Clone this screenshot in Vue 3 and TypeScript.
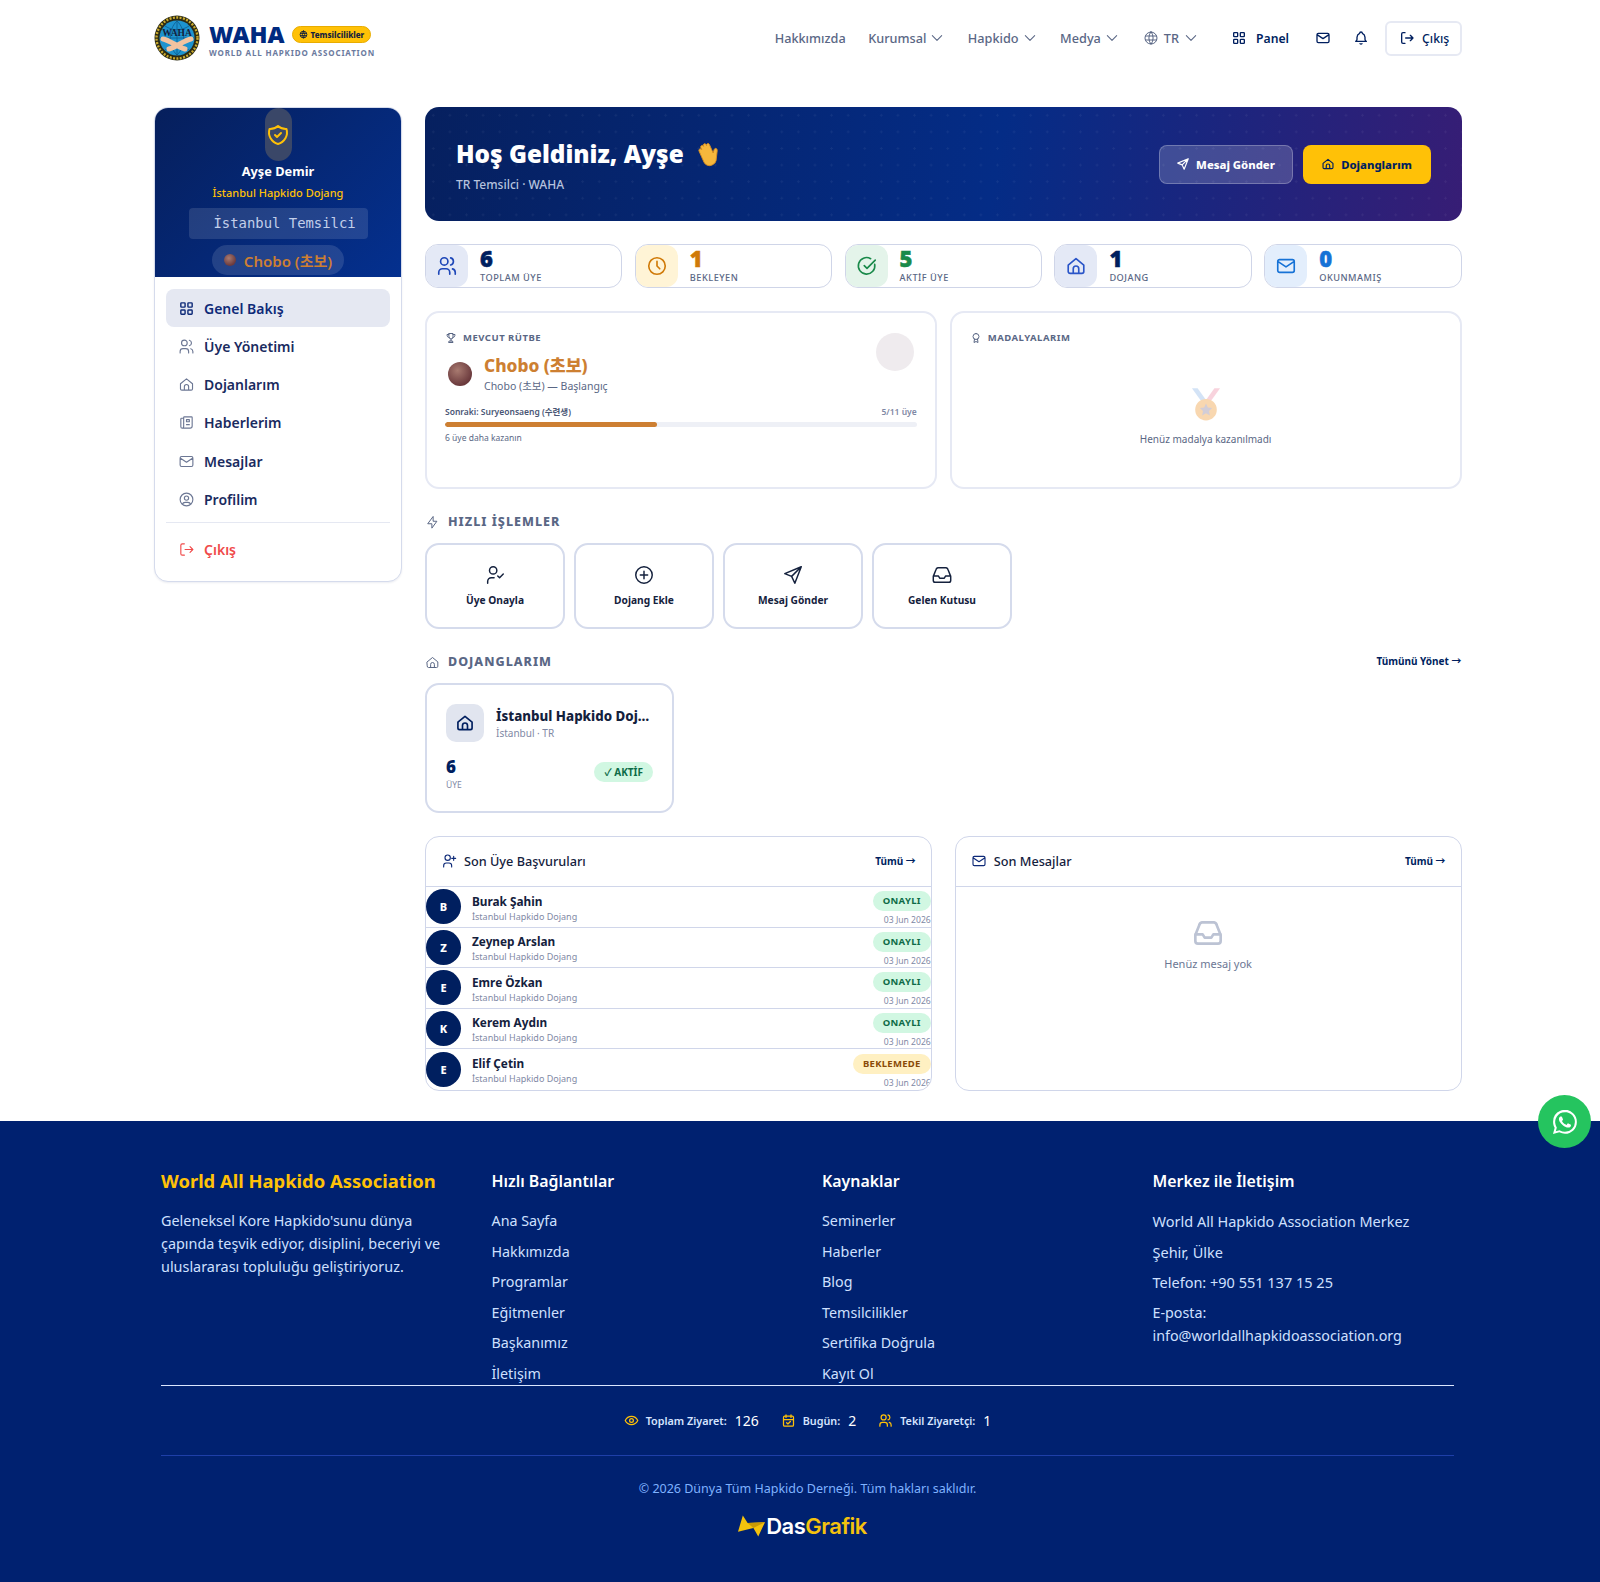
<template>
  <div class="page">
    <header class="topbar">
      <div class="brand">
        <svg class="emblem" viewBox="0 0 46 46">
          <circle cx="23" cy="23" r="22.5" fill="#2b2a14" />
          <circle cx="23" cy="23" r="20.5" fill="none" stroke="#c9a92c" stroke-width="2.4" stroke-dasharray="2 1.4" />
          <circle cx="23" cy="23" r="17.5" fill="#1d93cf" />
          <path d="M23 6v34M6 23h34M11 11c8 5 16 5 24 0M11 35c8-5 16-5 24 0M23 6c-9 8-9 26 0 34M23 6c9 8 9 26 0 34" fill="none" stroke="#0d5c8e" stroke-width=".8" />
          <text x="23" y="21" text-anchor="middle" font-size="9.5" font-weight="700" font-family="Liberation Serif, serif" fill="#14213d">WAHA</text>
          <path d="M9 24c6 1 15 8 22 10M37 24c-6 1-15 8-22 10" fill="none" stroke="#f2c3a0" stroke-width="5" stroke-linecap="round" />
        </svg>
        <div class="brand-text">
          <div class="brand-top">
            <span class="waha">WAHA</span>
            <span class="tem-badge">
              <svg class="ic tem-ic" viewBox="0 0 24 24"><path :d="icons.globe" /></svg>
              Temsilcilikler
            </span>
          </div>
          <div class="brand-sub">WORLD ALL HAPKIDO ASSOCIATION</div>
        </div>
      </div>
      <nav class="topnav">
        <a class="tn first">Hakkımızda</a>
        <a v-for="n in dropdowns" :key="n" class="tn">{{ n }}
          <svg class="ic chev" viewBox="0 0 24 24"><path :d="icons.chevron" /></svg>
        </a>
        <a class="tn lang">
          <svg class="ic globe" viewBox="0 0 24 24"><path :d="icons.globe" /></svg>TR
          <svg class="ic chev" viewBox="0 0 24 24"><path :d="icons.chevron" /></svg>
        </a>
        <a class="tn dark panel">
          <svg class="ic s16" viewBox="0 0 24 24"><path :d="icons.grid" /></svg>Panel
        </a>
        <svg class="ic s16 dark mail" viewBox="0 0 24 24"><path :d="icons.mail" /></svg>
        <svg class="ic s16 dark bell" viewBox="0 0 24 24"><path :d="icons.bell" /></svg>
        <button class="logout-btn">
          <svg class="ic s16" viewBox="0 0 24 24"><path :d="icons.logout" /></svg>Çıkış
        </button>
      </nav>
    </header>

    <div class="layout">
      <aside class="side">
        <div class="side-head">
          <div class="avatar">
            <svg class="ic shield" viewBox="0 0 24 24"><path :d="icons.shield" /></svg>
          </div>
          <div class="side-name">Ayşe Demir</div>
          <div class="side-dojang">İstanbul Hapkido Dojang</div>
          <div class="side-role">İstanbul Temsilci</div>
          <div class="side-rank"><i class="ball small"></i>Chobo (초보)</div>
        </div>
        <div class="side-nav">
          <a v-for="(item, i) in sideItems" :key="item.label" class="side-item" :class="{ active: i === 0 }">
            <svg class="ic s17" viewBox="0 0 24 24"><path :d="icons[item.icon]" /></svg>{{ item.label }}
          </a>
          <div class="side-line"></div>
          <a class="side-item exit">
            <svg class="ic s17" viewBox="0 0 24 24"><path :d="icons.logout" /></svg>Çıkış
          </a>
        </div>
      </aside>

      <main class="main">
        <section class="hero">
          <div>
            <h1 class="hero-title">Hoş Geldiniz, Ayşe
              <svg class="wave" viewBox="0 0 24 24">
                <g transform="rotate(-24 12 12)">
                  <path d="M6 12V6.5a1.3 1.3 0 0 1 2.6 0V4.500a1.3 1.3 0 0 1 2.6 0V4a1.3 1.3 0 0 1 2.6 0v1a1.3 1.3 0 0 1 2.6 0v8l2-2.400a1.400 1.400 0 0 1 2.100 1.800L16 20a5 5 0 0 1-4 2H11a5 5 0 0 1-5-5z" fill="#f6b73c" stroke="#d98e1f" stroke-width=".7" />
                </g>
              </svg>
            </h1>
            <p class="hero-sub">TR Temsilci · WAHA</p>
          </div>
          <div class="hero-btns">
            <button class="hbtn ghost"><svg class="ic s14" viewBox="0 0 24 24"><path :d="icons.send" /></svg>Mesaj Gönder</button>
            <button class="hbtn gold"><svg class="ic s14" viewBox="0 0 24 24"><path :d="icons.home" /></svg>Dojanglarım</button>
          </div>
        </section>

        <section class="stats">
          <div v-for="s in stats" :key="s.label" class="stat">
            <div class="stat-ic" :style="{ background: s.bg, color: s.color }">
              <svg class="ic s22" viewBox="0 0 24 24"><path :d="icons[s.icon]" /></svg>
            </div>
            <div class="stat-body">
              <div class="stat-num" :style="{ color: s.numColor }">{{ s.value }}</div>
              <div class="stat-label">{{ s.label }}</div>
            </div>
          </div>
        </section>

        <section class="rank-row">
          <div class="card rank-card">
            <div class="mini-title"><svg class="ic s12" viewBox="0 0 24 24"><path :d="icons.trophy" /></svg>MEVCUT RÜTBE</div>
            <div class="rank-main">
              <i class="ball"></i>
              <div>
                <div class="rank-name">Chobo (초보)</div>
                <div class="rank-desc">Chobo (초보) — Başlangıç</div>
              </div>
            </div>
            <div class="prog-top"><span>Sonraki: Suryeonsaeng (수련생)</span><span class="prog-count">5/11 üye</span></div>
            <div class="prog-bar"><div class="prog-fill" :style="{ width: progress + '%' }"></div></div>
            <div class="prog-note">6 üye daha kazanın</div>
            <div class="rank-ghost"></div>
          </div>
          <div class="card medal-card">
            <div class="mini-title"><svg class="ic s12" viewBox="0 0 24 24"><path :d="icons.award" /></svg>MADALYALARIM</div>
            <div class="medal-empty">
              <svg class="medal" viewBox="0 0 32 36">
                <path d="M1 0h6l10 14h-6z" fill="#a9c8ef" />
                <path d="M31 0h-6L15 14h6z" fill="#f3a9bd" />
                <circle cx="16" cy="23" r="11.500" fill="#f3b163" />
                <path d="M16 16.500l2 4.200 4.600.6-3.400 3.200.9 4.600-4.100-2.300-4.100 2.300.9-4.600-3.400-3.200 4.600-.6z" fill="#a79cb0" />
              </svg>
              <p>Henüz madalya kazanılmadı</p>
            </div>
          </div>
        </section>

        <h2 class="sec-title"><svg class="ic s15" viewBox="0 0 24 24"><path :d="icons.bolt" /></svg>HIZLI İŞLEMLER</h2>
        <section class="quick">
          <a v-for="q in quick" :key="q.label" class="quick-card">
            <svg class="ic s22" viewBox="0 0 24 24"><path :d="icons[q.icon]" /></svg>
            <span>{{ q.label }}</span>
          </a>
        </section>

        <div class="sec-head">
          <h2 class="sec-title flat"><svg class="ic s15" viewBox="0 0 24 24"><path :d="icons.home" /></svg>DOJANGLARIM</h2>
          <a class="more up">Tümünü Yönet →</a>
        </div>
        <div class="dojang-card">
          <div class="dj-top">
            <div class="dj-ic"><svg class="ic s20" viewBox="0 0 24 24"><path :d="icons.home" /></svg></div>
            <div class="dj-txt">
              <div class="dj-name">İstanbul Hapkido Dojang</div>
              <div class="dj-loc">İstanbul · TR</div>
            </div>
          </div>
          <div class="dj-bottom">
            <div>
              <div class="dj-num">6</div>
              <div class="dj-unit">ÜYE</div>
            </div>
            <span class="dj-badge">✓ AKTİF</span>
          </div>
        </div>

        <section class="lists">
          <div class="card list-card">
            <div class="list-head">
              <span class="list-title"><svg class="ic s16" viewBox="0 0 24 24"><path :d="icons.userPlus" /></svg>Son Üye Başvuruları</span>
              <a class="more">Tümü →</a>
            </div>
            <div v-for="m in members" :key="m.name" class="row">
              <div class="row-av">{{ m.name[0] }}</div>
              <div class="row-info">
                <div class="row-name">{{ m.name }}</div>
                <div class="row-sub">İstanbul Hapkido Dojang</div>
              </div>
              <div class="row-right">
                <span class="row-badge" :class="{ wait: m.status === 'BEKLEMEDE' }">{{ m.status }}</span>
                <span class="row-date">03 Jun 2026</span>
              </div>
            </div>
          </div>
          <div class="card list-card">
            <div class="list-head">
              <span class="list-title"><svg class="ic s16" viewBox="0 0 24 24"><path :d="icons.mail" /></svg>Son Mesajlar</span>
              <a class="more">Tümü →</a>
            </div>
            <div class="msg-empty">
              <svg class="ic s32" viewBox="0 0 24 24"><path :d="icons.inbox" /></svg>
              <p>Henüz mesaj yok</p>
            </div>
          </div>
        </section>
      </main>
    </div>

    <footer class="footer">
      <div class="foot-inner">
        <div class="foot-grid">
          <div>
            <h3 class="foot-brand">World All Hapkido Association</h3>
            <p class="foot-desc">Geleneksel Kore Hapkido'sunu dünya çapında teşvik ediyor, disiplini, beceriyi ve uluslararası topluluğu geliştiriyoruz.</p>
          </div>
          <div v-for="col in footCols" :key="col.title">
            <h4 class="foot-h">{{ col.title }}</h4>
            <a v-for="l in col.links" :key="l" class="foot-link">{{ l }}</a>
          </div>
          <div class="foot-contact">
            <h4 class="foot-h">Merkez ile İletişim</h4>
            <a class="foot-link">World All Hapkido Association Merkez</a>
            <a class="foot-link">Şehir, Ülke</a>
            <a class="foot-link">Telefon: +90 551 137 15 25</a>
            <p class="foot-mail">E-posta:<br />info@worldallhapkidoassociation.org</p>
          </div>
        </div>
        <div class="foot-stats">
          <span v-for="v in visits" :key="v.label" class="fs">
            <svg class="ic s15" viewBox="0 0 24 24"><path :d="icons[v.icon]" /></svg>
            <b>{{ v.label }}:</b><em>{{ v.value }}</em>
          </span>
        </div>
        <div class="foot-copy">
          <p>© 2026 Dünya Tüm Hapkido Derneği. Tüm hakları saklıdır.</p>
          <div class="das">
            <svg class="das-mark" viewBox="0 0 28 22">
              <path d="M5 0l5 8 18-1-7 15-5-9L0 17z" fill="#f4c20d" />
              <path d="M10 8l6 5 12-6z" fill="#c99a06" />
            </svg>
            <span>Das<u>Grafik</u></span>
          </div>
        </div>
      </div>
    </footer>

    <a class="wa">
      <svg viewBox="0 0 16 16" class="wa-ic"><path fill="#fff" d="M13.6 2.33A7.9 7.9 0 0 0 .05 7.92c0 1.4.37 2.76 1.06 3.96L0 16l4.2-1.1a7.9 7.9 0 0 0 3.78.96h.01c4.37 0 7.93-3.55 7.93-7.93 0-2.12-.83-4.11-2.32-5.6zM7.99 14.52a6.6 6.6 0 0 1-3.36-.92l-.24-.14-2.5.65.67-2.43-.16-.25a6.58 6.58 0 1 1 12.2-3.5 6.6 6.6 0 0 1-6.61 6.59zm3.61-4.93c-.2-.1-1.17-.58-1.35-.64-.18-.07-.31-.1-.44.1-.13.2-.51.64-.63.77-.11.13-.23.15-.43.05-.2-.1-.84-.31-1.6-.99-.59-.53-.99-1.18-1.1-1.38-.12-.2-.02-.3.08-.4l.3-.35c.1-.11.13-.2.2-.33.06-.13.03-.25-.02-.35-.05-.1-.44-1.07-.61-1.46-.16-.38-.32-.33-.44-.34h-.38c-.13 0-.35.05-.53.25-.18.2-.69.68-.69 1.65 0 .97.71 1.91.81 2.04.1.13 1.4 2.13 3.38 2.99.47.2.84.33 1.13.42.47.15.9.13 1.24.08.38-.06 1.17-.48 1.33-.94.17-.46.17-.86.12-.94-.05-.08-.18-.13-.38-.23z" /></svg>
    </a>
  </div>
</template>

<script setup lang="ts">
const progress = 45

const icons: Record<string, string> = {
  grid: 'M5 4h4a1 1 0 0 1 1 1v4a1 1 0 0 1-1 1H5a1 1 0 0 1-1-1V5a1 1 0 0 1 1-1zM15 4h4a1 1 0 0 1 1 1v4a1 1 0 0 1-1 1h-4a1 1 0 0 1-1-1V5a1 1 0 0 1 1-1zM5 14h4a1 1 0 0 1 1 1v4a1 1 0 0 1-1 1H5a1 1 0 0 1-1-1v-4a1 1 0 0 1 1-1zM15 14h4a1 1 0 0 1 1 1v4a1 1 0 0 1-1 1h-4a1 1 0 0 1-1-1v-4a1 1 0 0 1 1-1z',
  users: 'M9 3a4 4 0 1 0 0 8 4 4 0 0 0 0-8zM3 21v-2a4 4 0 0 1 4-4h4a4 4 0 0 1 4 4v2M16 3.13a4 4 0 0 1 0 7.75M21 21v-2a4 4 0 0 0-3-3.85',
  home: 'M3.500 11 12 4l8.500 7v7a2 2 0 0 1-2 2h-13a2 2 0 0 1-2-2zM9 20v-5a3 3 0 0 1 6 0v5',
  news: 'M8 6H5a1 1 0 0 0-1 1v11a2 2 0 0 0 4 0V5a1 1 0 0 1 1-1h10a1 1 0 0 1 1 1v12a3 3 0 0 1-3 3H6M12 8h4v3h-4zM12 15h4',
  mail: 'M5 5h14a2 2 0 0 1 2 2v10a2 2 0 0 1-2 2H5a2 2 0 0 1-2-2V7a2 2 0 0 1 2-2zM3 7l9 6 9-6',
  profile: 'M12 3a9 9 0 1 0 0 18 9 9 0 0 0 0-18zM12 7a3 3 0 1 0 0 6 3 3 0 0 0 0-6zM6.200 18.800A4 4 0 0 1 10 16h4a4 4 0 0 1 3.800 2.800',
  logout: 'M9 4H6a2 2 0 0 0-2 2v12a2 2 0 0 0 2 2h3M10 12h11M17 8l4 4-4 4',
  chevron: 'M4 8l8 8 8-8',
  globe: 'M12 3a9 9 0 1 0 0 18 9 9 0 0 0 0-18zM3.600 9h16.800M3.600 15h16.800M11.500 3a17 17 0 0 0 0 18M12.500 3a17 17 0 0 1 0 18',
  bell: 'M10 5a2 2 0 1 1 4 0 7 7 0 0 1 4 6v3a4 4 0 0 0 2 3H4a4 4 0 0 0 2-3v-3a7 7 0 0 1 4-6M10.500 20.500a2 2 0 0 0 3 0',
  send: 'M21 3 3 10.500l7.500 3L14 21zM21 3 10.500 13.500',
  shield: 'M12 3a12 12 0 0 0 8.500 3A12 12 0 0 1 12 21 12 12 0 0 1 3.500 6 12 12 0 0 0 12 3zM9 12l2 2 4-4',
  clock: 'M12 3a9 9 0 1 0 0 18 9 9 0 0 0 0-18zM12 7v5l3 3',
  check: 'M20.400 10.200A9 9 0 1 1 16 4M9 11.500l3 3 9-9',
  trophy: 'M8 3h8v7a4 4 0 0 1-8 0zM8 5H4c0 4 1.500 6 4 6M16 5h4c0 4-1.500 6-4 6M12 14v4M8 21h8l-1-3H9z',
  award: 'M12 3a6 6 0 1 0 0 12 6 6 0 0 0 0-12zM9 14l-1 7 4-2 4 2-1-7',
  bolt: 'M13 3v7h6l-8 11v-7H5z',
  userCheck: 'M10 3a4 4 0 1 0 0 8 4 4 0 0 0 0-8zM4 21v-2a4 4 0 0 1 4-4h3M15 13l2 2 4-4',
  plus: 'M12 3a9 9 0 1 0 0 18 9 9 0 0 0 0-18zM8 12h8M12 8v8',
  inbox: 'M2.500 13.500 5.500 6a2.500 2.500 0 0 1 2-2h9a2.500 2.500 0 0 1 2 2l3 7.500V18a2 2 0 0 1-2 2H4.500a2 2 0 0 1-2-2zM2.500 13H8l1.500 2.500h5L16 13h5.500',
  userPlus: 'M10 3a4 4 0 1 0 0 8 4 4 0 0 0 0-8zM4 21v-2a4 4 0 0 1 4-4h4a4 4 0 0 1 4 4v2M16 8h6M19 5v6',
  eye: 'M12 5.500c5 0 8.500 3.500 10 6.500-1.500 3-5 6.500-10 6.500S3.500 15 2 12c1.500-3 5-6.500 10-6.500zM12 9a3 3 0 1 0 0 6 3 3 0 0 0 0-6z',
  calendar: 'M6 5h12a2 2 0 0 1 2 2v12a2 2 0 0 1-2 2H6a2 2 0 0 1-2-2V7a2 2 0 0 1 2-2zM16 3v4M8 3v4M4 10.500h16M9 15.500l2 2 4-4',
}

const dropdowns = ['Kurumsal', 'Hapkido', 'Medya']

const sideItems = [
  { label: 'Genel Bakış', icon: 'grid' },
  { label: 'Üye Yönetimi', icon: 'users' },
  { label: 'Dojanlarım', icon: 'home' },
  { label: 'Haberlerim', icon: 'news' },
  { label: 'Mesajlar', icon: 'mail' },
  { label: 'Profilim', icon: 'profile' },
]

const stats = [
  { value: 6, label: 'TOPLAM ÜYE', icon: 'users', bg: '#e4e9f6', color: '#1e47b8', numColor: '#001f5f' },
  { value: 1, label: 'BEKLEYEN', icon: 'clock', bg: '#fff4d6', color: '#d07a08', numColor: '#d07a08' },
  { value: 5, label: 'AKTİF ÜYE', icon: 'check', bg: '#e4f4ea', color: '#1a8a4a', numColor: '#1a8a4a' },
  { value: 1, label: 'DOJANG', icon: 'home', bg: '#e4e9f6', color: '#2a55c8', numColor: '#001f5f' },
  { value: 0, label: 'OKUNMAMIŞ', icon: 'mail', bg: '#e3eefc', color: '#1672d6', numColor: '#1672d6' },
]

const quick = [
  { label: 'Üye Onayla', icon: 'userCheck' },
  { label: 'Dojang Ekle', icon: 'plus' },
  { label: 'Mesaj Gönder', icon: 'send' },
  { label: 'Gelen Kutusu', icon: 'inbox' },
]

const members = [
  { name: 'Burak Şahin', status: 'ONAYLI' },
  { name: 'Zeynep Arslan', status: 'ONAYLI' },
  { name: 'Emre Özkan', status: 'ONAYLI' },
  { name: 'Kerem Aydın', status: 'ONAYLI' },
  { name: 'Elif Çetin', status: 'BEKLEMEDE' },
]

const footCols = [
  { title: 'Hızlı Bağlantılar', links: ['Ana Sayfa', 'Hakkımızda', 'Programlar', 'Eğitmenler', 'Başkanımız', 'İletişim'] },
  { title: 'Kaynaklar', links: ['Seminerler', 'Haberler', 'Blog', 'Temsilcilikler', 'Sertifika Doğrula', 'Kayıt Ol'] },
]

const visits = [
  { label: 'Toplam Ziyaret', value: 126, icon: 'eye' },
  { label: 'Bugün', value: 2, icon: 'calendar' },
  { label: 'Tekil Ziyaretçi', value: 1, icon: 'users' },
]
</script>

<style>
html, body { margin: 0; background: #fff; }
</style>

<style scoped>
.page {
  position: relative;
  height: 1582px;
  overflow: hidden;
  font-family: "Noto Sans", "Noto Sans CJK KR", sans-serif;
  color: #001f5f;
}
.ic { fill: none; stroke: currentColor; stroke-width: 2; stroke-linecap: round; stroke-linejoin: round; flex: none; }
.s12 { width: 12px; height: 12px; }
.s14 { width: 14px; height: 14px; }
.s15 { width: 15px; height: 15px; }
.s16 { width: 16px; height: 16px; }
.s17 { width: 17px; height: 17px; }
.s20 { width: 20px; height: 20px; }
.s22 { width: 22px; height: 22px; }
.s32 { width: 32px; height: 32px; }

/* header */
.topbar { display: flex; align-items: center; justify-content: space-between; width: 1308px; height: 76px; margin-left: 154px; }
.brand { display: flex; align-items: center; gap: 9px; }
.emblem { width: 46px; height: 46px; display: block; }
.brand-text { padding-top: 3px; }
.brand-top { display: flex; align-items: center; gap: 7px; height: 26px; }
.waha { font-size: 23.5px; font-weight: 900; color: #002a7f; line-height: 26px; }
.tem-badge { display: flex; align-items: center; gap: 3px; height: 15px; padding: 0 6px; border-radius: 9px; background: #ffc107; border: 1px solid #e8ac00; font-size: 8px; font-weight: 800; color: #14213d; }
.tem-ic { width: 9px; height: 9px; stroke-width: 2.500; }
.brand-sub { font-size: 8px; font-weight: 700; letter-spacing: .83px; color: #6b7a9e; white-space: nowrap; }
.topnav { display: flex; align-items: center; font-size: 12.7px; font-weight: 500; color: #5a6785; }
.tn { display: flex; align-items: center; gap: 4px; margin-right: 23.500px; white-space: nowrap; }
.tn.first { margin-right: 22.500px; }
.chev { width: 14px; height: 14px; stroke-width: 1.800; }
.lang { gap: 5px; margin-left: .5px; margin-right: 33px; }
.globe { width: 16px; height: 16px; stroke-width: 1.500; }
.dark { color: #001f5f; }
.panel { gap: 9px; font-size: 12.200px; font-weight: 600; margin-right: 26px; }
.mail { margin-right: 22px; }
.bell { margin-right: 16px; }
.logout-btn { display: flex; align-items: center; gap: 7px; width: 77px; height: 35px; padding: 0 0 0 12px; box-sizing: border-box; background: #fff; border: 2px solid #e6e9f3; border-radius: 6px; font: 500 12.300px "Noto Sans", sans-serif; color: #001f5f; }

/* layout */
.layout { display: flex; gap: 23px; width: 1308px; margin: 31px 0 0 154px; align-items: flex-start; }
.side { width: 248px; flex: none; box-sizing: border-box; height: 475px; background: #fff; border: 1px solid #d5dbec; border-radius: 14px; box-shadow: 0 1px 2px rgba(0, 31, 95, .08); overflow: hidden; }
.side-head { height: 169px; overflow: hidden; background: linear-gradient(135deg, #061f5c, #04308f); display: flex; flex-direction: column; align-items: center; text-align: center; }
.avatar { width: 27px; height: 53px; flex: none; border-radius: 14px; background: #3a4768; display: flex; align-items: center; justify-content: center; }
.shield { width: 24px; height: 24px; color: #ffc107; }
.side-name { font-size: 12.800px; font-weight: 700; color: #fff; line-height: 20px; }
.side-dojang { font-size: 11px; font-weight: 500; color: #ffc107; line-height: 20px; margin-top: 2px; }
.side-role { width: 179px; height: 31px; margin-top: 5px; padding-left: 25px; box-sizing: border-box; border-radius: 4px; background: rgba(255, 255, 255, .12); font: 13.900px/31px "DejaVu Sans Mono", monospace; color: #c2cfea; text-align: left; white-space: nowrap; flex: none; }
.side-rank { display: flex; align-items: center; gap: 8px; flex: none; height: 30px; margin-top: 6px; padding: 0 12px; border-radius: 15px; background: rgba(255, 255, 255, .12); font-size: 15px; font-weight: 600; color: #cd7f32; }
.ball { display: block; width: 24px; height: 24px; border-radius: 50%; background: radial-gradient(circle at 40% 35%, #a87a70, #6b3a3d 70%); flex: none; }
.ball.small { width: 12px; height: 12px; }
.side-nav { padding: 12px 11px 0; }
.side-item { display: flex; align-items: center; gap: 9px; height: 38px; padding: 0 12px; border-radius: 8px; margin-bottom: .3px; font-size: 14px; font-weight: 600; color: #1a2b5f; }
.side-item .ic { color: #6c7794; stroke-width: 1.600; }
.side-item.active { background: #e5e8f2; color: #0e2a78; }
.side-item.active .ic { color: #0e2a78; stroke-width: 2; }
.side-line { height: 1px; background: #e5e8f2; margin: 4px 0 7px; }
.side-item.exit { color: #f04a4a; }
.side-item.exit .ic { color: #f04a4a; }

.main { width: 1036.500px; flex: none; }
.hero { display: flex; align-items: center; justify-content: space-between; height: 114px; padding: 0 31px; box-sizing: border-box; border-radius: 14px; color: #fff;
  background: radial-gradient(circle, rgba(255, 255, 255, .05) 1px, transparent 1.200px) 0 0 / 16.600px 16.600px, linear-gradient(100deg, #06205f 0%, #042c86 55%, #371d75 100%); }
.hero-title { display: flex; align-items: center; gap: 10px; margin: 2px 0 0; font-size: 24.300px; font-weight: 900; line-height: 32px; }
.wave { width: 28px; height: 28px; }
.hero-sub { margin: 7px 0 0; font-size: 12px; font-weight: 500; color: #b6c2de; line-height: 16px; }
.hero-btns { display: flex; gap: 10px; }
.hbtn { display: flex; align-items: center; justify-content: center; gap: 6px; height: 39px; box-sizing: border-box; border-radius: 8px; font: 800 11.300px "Noto Sans", sans-serif; }
.hbtn.ghost { width: 134px; background: rgba(255, 255, 255, .18); border: 1px solid rgba(255, 255, 255, .25); color: #fff; }
.hbtn.gold { width: 128px; background: #ffc107; border: 0; color: #001f5f; }

.stats { display: grid; grid-template-columns: repeat(5, 1fr); gap: 12.500px; margin-top: 23px; }
.stat { display: flex; height: 44px; box-sizing: border-box; border: 1px solid #cfd5e8; border-radius: 13px; overflow: hidden; background: #fff; }
.stat-ic { width: 42px; display: flex; align-items: center; justify-content: center; border-radius: 12px; flex: none; }
.stat-ic .ic { stroke-width: 1.800; }
.stat-body { padding-left: 12px; }
.stat-num { font-size: 22px; font-weight: 900; line-height: 26px; -webkit-text-stroke: .5px currentColor; }
.stat-label { font-size: 9.200px; font-weight: 500; letter-spacing: .5px; color: #5a6785; line-height: 13px; }

.card { background: #fff; border: 1px solid #d0d6ea; border-radius: 14px; box-sizing: border-box; }
.rank-row { display: grid; grid-template-columns: 1fr 1fr; gap: 13px; margin-top: 23px; height: 178px; }
.rank-card, .medal-card { padding: 18px 18px 0; border: 2px solid #e6e9f4; }
.rank-card { position: relative; }
.mini-title { display: flex; align-items: center; gap: 6px; font-size: 9.500px; font-weight: 700; letter-spacing: .5px; color: #5a6785; line-height: 14px; }
.rank-main { display: flex; align-items: center; gap: 12px; margin: 9px 0 0 3px; }
.rank-name { font-size: 17.300px; font-weight: 800; color: #cd7f32; line-height: 24px; }
.rank-desc { font-size: 10.500px; color: #5a6785; line-height: 16px; }
.prog-top { display: flex; justify-content: space-between; margin-top: 12px; font-size: 8.500px; font-weight: 600; color: #4a5675; line-height: 12px; }
.prog-count { color: #7f89a5; }
.prog-bar { height: 5px; margin-top: 4px; border-radius: 3px; background: #eef0f6; overflow: hidden; }
.prog-fill { height: 100%; border-radius: 3px; background: #cd7f32; }
.prog-note { margin-top: 5px; font-size: 8.500px; color: #5a6785; line-height: 12px; }
.rank-ghost { position: absolute; top: 20px; right: 21px; width: 38px; height: 38px; border-radius: 50%; background: #efebee; }
.medal-empty { display: flex; flex-direction: column; align-items: center; margin-top: 43px; }
.medal { width: 30px; height: 34px; opacity: .5; }
.medal-empty p { margin: 10px 0 0; font-size: 10px; color: #5a6785; line-height: 14px; }

.sec-title { display: flex; align-items: center; gap: 8px; margin: 24px 0 0; font-size: 12.500px; font-weight: 800; letter-spacing: 1px; color: #5a6785; line-height: 18px; }
.sec-title .ic { stroke-width: 1.600; }
.sec-title.flat { margin: 1px 0 0; }
.quick { display: flex; gap: 9px; margin-top: 12px; }
.quick-card { width: 140px; height: 86px; box-sizing: border-box; display: flex; flex-direction: column; align-items: center; padding-top: 19px; gap: 6px; border: 2px solid #d5dbec; border-radius: 14px; background: #fff; color: #14213d; }
.quick-card .ic { stroke-width: 1.600; }
.quick-card span { font-size: 10.200px; font-weight: 700; line-height: 16px; }
.sec-head { display: flex; align-items: center; justify-content: space-between; margin-top: 23px; }
.more { font-size: 10px; font-weight: 700; color: #001f5f; white-space: nowrap; }
.more.up { margin-top: -2px; }
.dojang-card { width: 249px; height: 130px; box-sizing: border-box; margin-top: 12px; padding: 19px 19px 0; border: 2px solid #d5dbec; border-radius: 14px; }
.dj-top { display: flex; gap: 12px; align-items: center; }
.dj-ic { width: 38px; height: 38px; flex: none; border-radius: 10px; background: #e1e5ef; display: flex; align-items: center; justify-content: center; color: #001f5f; }
.dj-txt { min-width: 0; flex: 1; }
.dj-name { font-size: 13.300px; font-weight: 800; color: #14213d; overflow: hidden; white-space: nowrap; text-overflow: ellipsis; line-height: 18px; }
.dj-loc { font-size: 10px; color: #7f89a5; line-height: 14px; margin-top: 1px; }
.dj-bottom { display: flex; justify-content: space-between; align-items: center; margin-top: 15px; }
.dj-num { font-size: 17px; font-weight: 900; line-height: 20px; }
.dj-unit { font-size: 8.500px; color: #7f89a5; line-height: 14px; margin-top: 1px; }
.dj-badge { height: 20px; padding: 0 10px; border-radius: 10px; background: #d1f7e2; color: #0d6b47; font-size: 10px; font-weight: 700; line-height: 20px; margin-top: -6px; }

.lists { display: grid; grid-template-columns: 1fr 1fr; gap: 23px; margin-top: 23px; }
.list-card { height: 255px; overflow: hidden; }
.list-head { display: flex; align-items: center; justify-content: space-between; height: 50px; padding: 0 15px 2px; border-bottom: 1px solid #d0d6ea; box-sizing: border-box; }
.list-title { display: flex; align-items: center; gap: 7px; font-size: 12.700px; font-weight: 500; color: #14213d; }
.list-title .ic { stroke-width: 1.700; color: #0e2a78; }
.row { display: flex; align-items: center; height: 40.500px; box-sizing: border-box; border-bottom: 1px solid #d0d6ea; }
.row:last-child { border-bottom: 0; }
.row-av { width: 35px; height: 35px; flex: none; border-radius: 50%; background: #001f5f; color: #fff; font-size: 11px; font-weight: 800; display: flex; align-items: center; justify-content: center; }
.row-info { flex: 1; padding: 3px 0 0 11px; }
.row-name { font-size: 11.800px; font-weight: 700; color: #14213d; line-height: 16px; }
.row-sub { font-size: 9px; color: #7f89a5; line-height: 14px; margin-top: 1px; }
.row-right { display: flex; flex-direction: column; align-items: flex-end; padding-top: 4px; }
.row-badge { height: 20px; padding: 0 10px; border-radius: 10px; background: #d1f7e2; color: #0d6b47; font-size: 9.500px; font-weight: 700; letter-spacing: .3px; line-height: 20px; }
.row-badge.wait { background: #fff0c2; color: #8a4b08; }
.row-date { font-size: 8.600px; color: #7f89a5; line-height: 12px; margin-top: 3px; }
.msg-empty { display: flex; flex-direction: column; align-items: center; padding-top: 30px; color: #bcc3d4; }
.msg-empty p { margin: 7px 0 0; font-size: 11px; color: #6c7794; line-height: 16px; }

/* footer */
.footer { position: absolute; left: 0; right: 0; top: 1121px; height: 461px; background: #002170; }
.foot-inner { width: 1293px; margin-left: 161px; }
.foot-grid { display: grid; grid-template-columns: repeat(4, 298.500px); gap: 32px; height: 264px; padding-top: 46px; box-sizing: border-box; }
.foot-brand { margin: 0; font-size: 18.400px; font-weight: 700; color: #ffc107; line-height: 28px; }
.foot-h { margin: 0; font-size: 15.900px; font-weight: 600; color: #fff; line-height: 28px; }
.foot-desc { margin: 14px 0 0; font-size: 14.400px; line-height: 23px; color: #cfe0ff; }
.foot-link { display: block; font-size: 14.300px; line-height: 20px; margin-top: 10.600px; color: #cfe0ff; }
.foot-h + .foot-link { margin-top: 16px; }
.foot-contact .foot-link { font-size: 14.500px; }
.foot-mail { margin: 10px 0 0; font-size: 14.300px; line-height: 22.500px; color: #cfe0ff; }
.foot-stats { display: flex; justify-content: center; gap: 22px; height: 71px; box-sizing: border-box; border-top: 1px solid #dbe6ff; border-bottom: 1px solid #1e3fa8; align-items: center; }
.fs { display: flex; align-items: center; gap: 7px; color: #ffc107; }
.fs b { font-size: 10.800px; font-weight: 600; color: #d6e4ff; }
.fs em { font-style: normal; font-size: 14px; color: #fff; margin-left: 1px; }
.foot-copy { text-align: center; padding-top: 24px; }
.foot-copy p { margin: 0; font-size: 12.500px; color: #7fb2ff; line-height: 18px; }
.das { display: flex; justify-content: center; align-items: center; gap: 1px; margin-top: 14px; margin-right: 10px; }
.das-mark { width: 27px; height: 22px; }
.das span { font: 600 22px/28px Inter, sans-serif; color: #fff; letter-spacing: -.5px; }
.das u { text-decoration: none; color: #f4c20d; }

.wa { position: absolute; left: 1538px; top: 1095px; width: 53px; height: 53px; border-radius: 50%; background: #25c45f; display: flex; align-items: center; justify-content: center; }
.wa-ic { width: 24px; height: 24px; }
</style>
